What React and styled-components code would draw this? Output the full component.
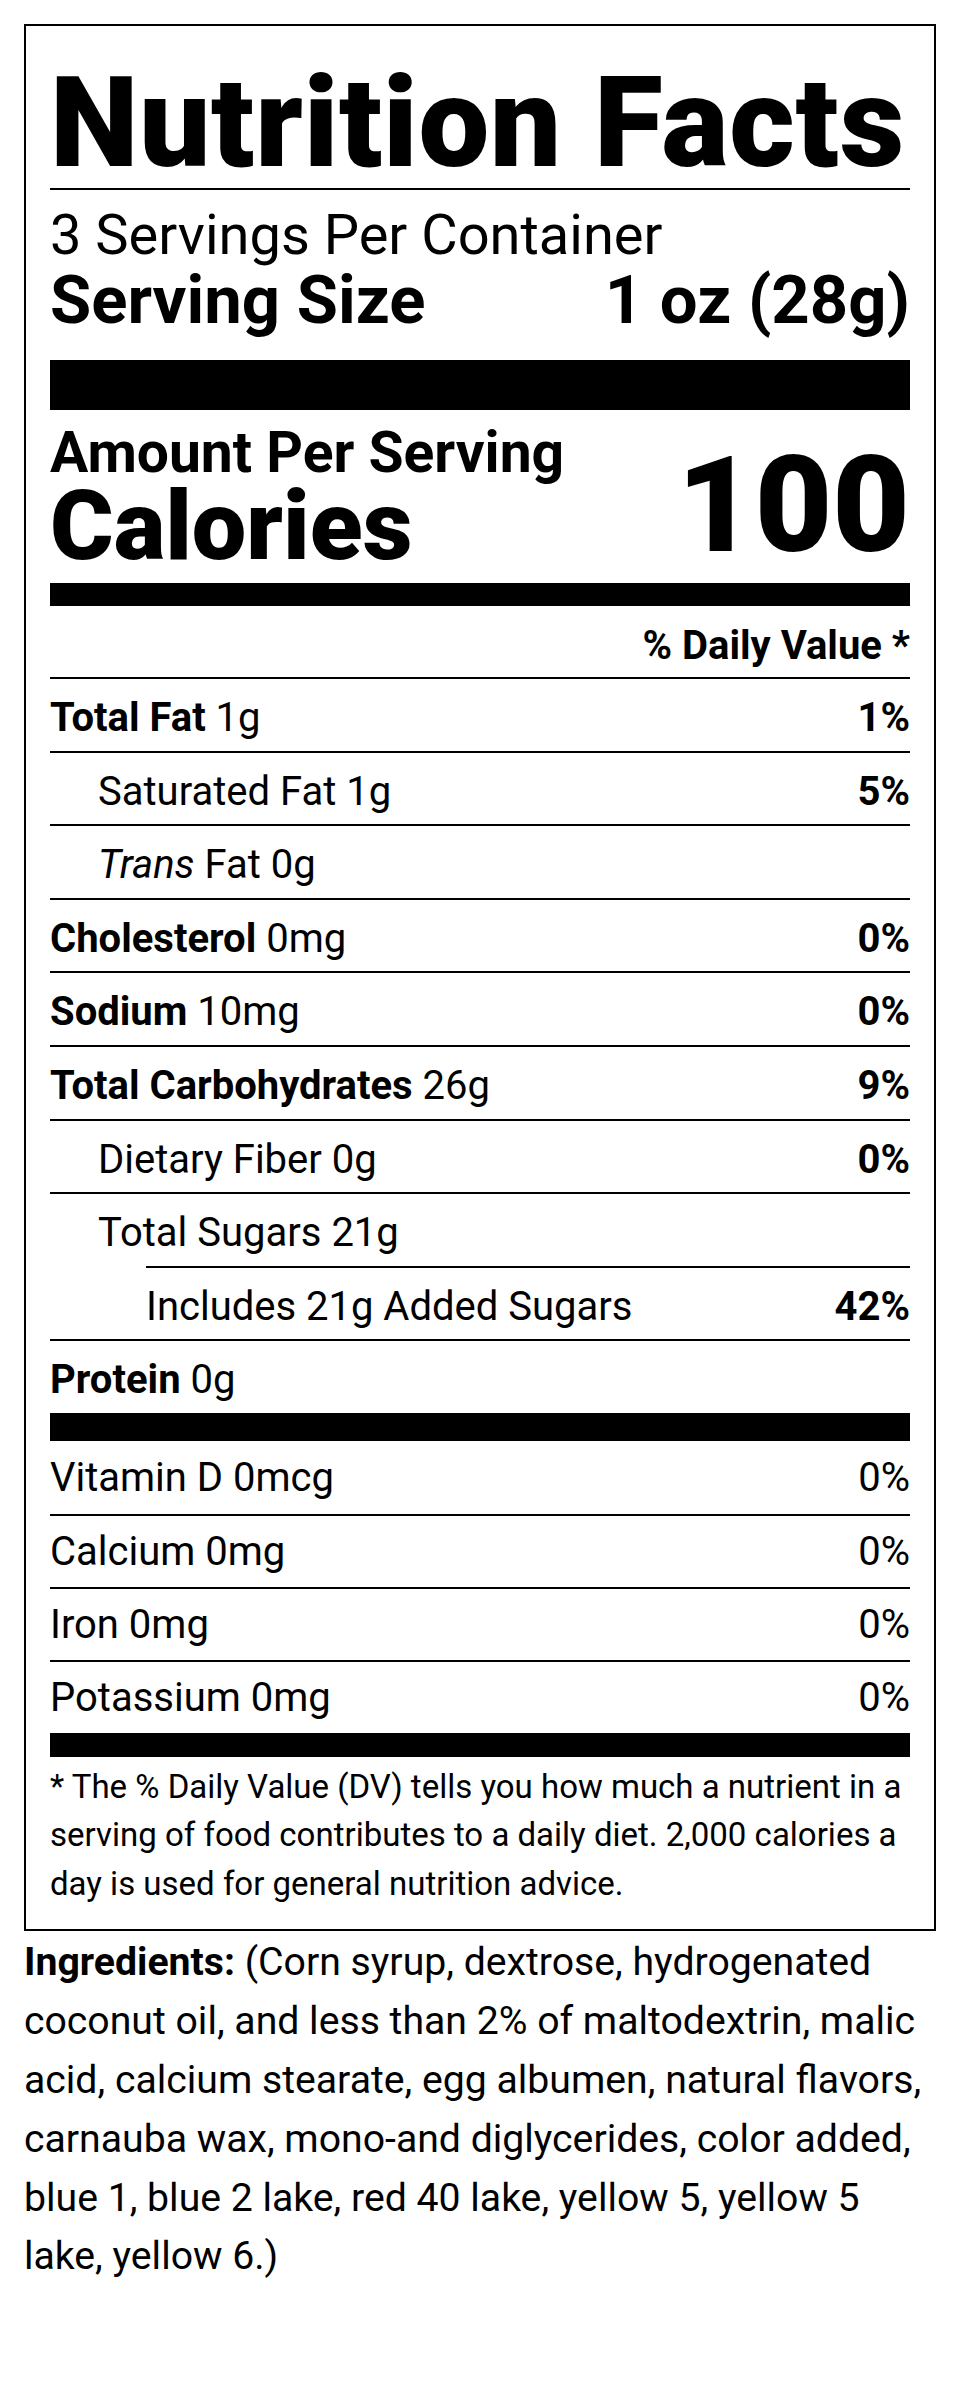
import React from 'react';
import styled, { createGlobalStyle } from 'styled-components';

const GlobalStyle = createGlobalStyle`
  html, body { margin: 0; padding: 0; background: #fff; }
  body {
    font-family: Roboto, "Liberation Sans", Arial, sans-serif;
    color: #000;
  }
  * { box-sizing: border-box; }
`;

const Page = styled.main`
  width: 960px;
  padding: 24px;
`;

const Label = styled.section`
  border: 2px solid #000;
  padding: 0 24px 21px;
`;

const Title = styled.h1`
  margin: 0 0 2px;
  padding-top: 34px;
  font-size: 126px;
  font-weight: 900;
  line-height: 126px;
  letter-spacing: 0.75px;
  white-space: nowrap;
`;

const ServingsBlock = styled.div`
  border-top: 2px solid #000;
  padding: 14.5px 0 25.5px;
`;

const ServingsCount = styled.p`
  margin: 0;
  font-size: 56px;
  line-height: 60px;
  font-weight: 400;
`;

const ServingSize = styled.div`
  display: flex;
  justify-content: space-between;
  font-size: 67px;
  line-height: 70px;
  font-weight: 700;
`;

const Bar = styled.div`
  height: ${p => p.$h}px;
  background: #000;
`;

const CaloriesBlock = styled.div`
  display: flex;
  justify-content: space-between;
  align-items: flex-end;
  padding: 15px 0 10.4px;
`;

const CaloriesLabels = styled.div`
  display: flex;
  flex-direction: column;
`;

const AmountLine = styled.span`
  font-size: 57px;
  line-height: 56px;
  font-weight: 700;
`;

const CaloriesLine = styled.span`
  font-size: 97px;
  line-height: 91.6px;
  font-weight: 900;
`;

const CaloriesValue = styled.span`
  font-size: 134px;
  line-height: 132.8px;
  font-weight: 900;
`;

const DvHeader = styled.div`
  text-align: right;
  padding: 20px 0 11px;
  font-size: 40px;
  line-height: 40px;
  font-weight: 700;
`;

const Row = styled.div`
  display: flex;
  justify-content: space-between;
  align-items: baseline;
  border-top: ${p => (p.$noRule ? '0' : '2px solid #000')};
  margin-left: ${p => p.$ruleInset || 0}px;
  padding: ${p => p.$top}px 0 ${p => p.$bottom}px ${p => p.$indent || 0}px;
  font-size: 40px;
  line-height: 48px;
  font-weight: 400;
`;

const Name = styled.span`
  white-space: nowrap;
`;

const Strong = styled.b`
  font-weight: 700;
`;

const Em = styled.i`
  font-style: italic;
`;

const Pct = styled.span`
  font-weight: ${p => (p.$light ? 400 : 700)};
`;

const Footnote = styled.p`
  margin: 0;
  padding-top: 6px;
  font-size: 33px;
  line-height: 48.5px;
`;

const Ingredients = styled.p`
  margin: 2px 0 0;
  font-size: 39.2px;
  line-height: 58.8px;
`;

const nutrients = [
  { bold: 'Total Fat', rest: ' 1g', pct: '1%' },
  { rest: 'Saturated Fat 1g', pct: '5%', indent: 48 },
  { italic: 'Trans', rest: ' Fat 0g', indent: 48 },
  { bold: 'Cholesterol', rest: ' 0mg', pct: '0%' },
  { bold: 'Sodium', rest: ' 10mg', pct: '0%' },
  { bold: 'Total Carbohydrates', rest: ' 26g', pct: '9%' },
  { rest: 'Dietary Fiber 0g', pct: '0%', indent: 48 },
  { rest: 'Total Sugars 21g', indent: 48 },
  { rest: 'Includes 21g Added Sugars', pct: '42%', ruleInset: 96 },
  { bold: 'Protein', rest: ' 0g' },
];

const vitamins = [
  { name: 'Vitamin D 0mcg', pct: '0%' },
  { name: 'Calcium 0mg', pct: '0%' },
  { name: 'Iron 0mg', pct: '0%' },
  { name: 'Potassium 0mg', pct: '0%' },
];

export default function App() {
  return (
    <>
      <GlobalStyle />
      <Page>
        <Label>
          <Title>Nutrition Facts</Title>
          <ServingsBlock>
            <ServingsCount>3 Servings Per Container</ServingsCount>
            <ServingSize>
              <span>Serving Size</span>
              <span>1 oz (28g)</span>
            </ServingSize>
          </ServingsBlock>
          <Bar $h={50} />
          <CaloriesBlock>
            <CaloriesLabels>
              <AmountLine>Amount Per Serving</AmountLine>
              <CaloriesLine>Calories</CaloriesLine>
            </CaloriesLabels>
            <CaloriesValue>100</CaloriesValue>
          </CaloriesBlock>
          <Bar $h={23} />
          <DvHeader>% Daily Value *</DvHeader>
          {nutrients.map((n, i) => (
            <Row
              key={i}
              $top={15}
              $bottom={8.6}
              $indent={n.indent}
              $ruleInset={n.ruleInset}
            >
              <Name>
                {n.bold && <Strong>{n.bold}</Strong>}
                {n.italic && <Em>{n.italic}</Em>}
                {n.rest}
              </Name>
              {n.pct && <Pct>{n.pct}</Pct>}
            </Row>
          ))}
          <Bar $h={28} />
          {vitamins.map((v, i) => (
            <Row
              key={v.name}
              $noRule={i === 0}
              $top={i === 0 ? 13.3 : 12}
              $bottom={i === 0 ? 11.7 : 11}
            >
              <Name>{v.name}</Name>
              <Pct $light>{v.pct}</Pct>
            </Row>
          ))}
          <Bar $h={24} />
          <Footnote>
            * The % Daily Value (DV) tells you how much a nutrient in a serving of food
            contributes to a daily diet. 2,000 calories a day is used for general nutrition
            advice.
          </Footnote>
        </Label>
        <Ingredients>
          <Strong>Ingredients:</Strong> (Corn syrup, dextrose, hydrogenated coconut oil, and
          less than 2% of maltodextrin, malic acid, calcium stearate, egg albumen, natural
          flavors, carnauba wax, mono-and diglycerides, color added, blue 1, blue 2 lake, red
          40 lake, yellow 5, yellow 5 lake, yellow 6.)
        </Ingredients>
      </Page>
    </>
  );
}
